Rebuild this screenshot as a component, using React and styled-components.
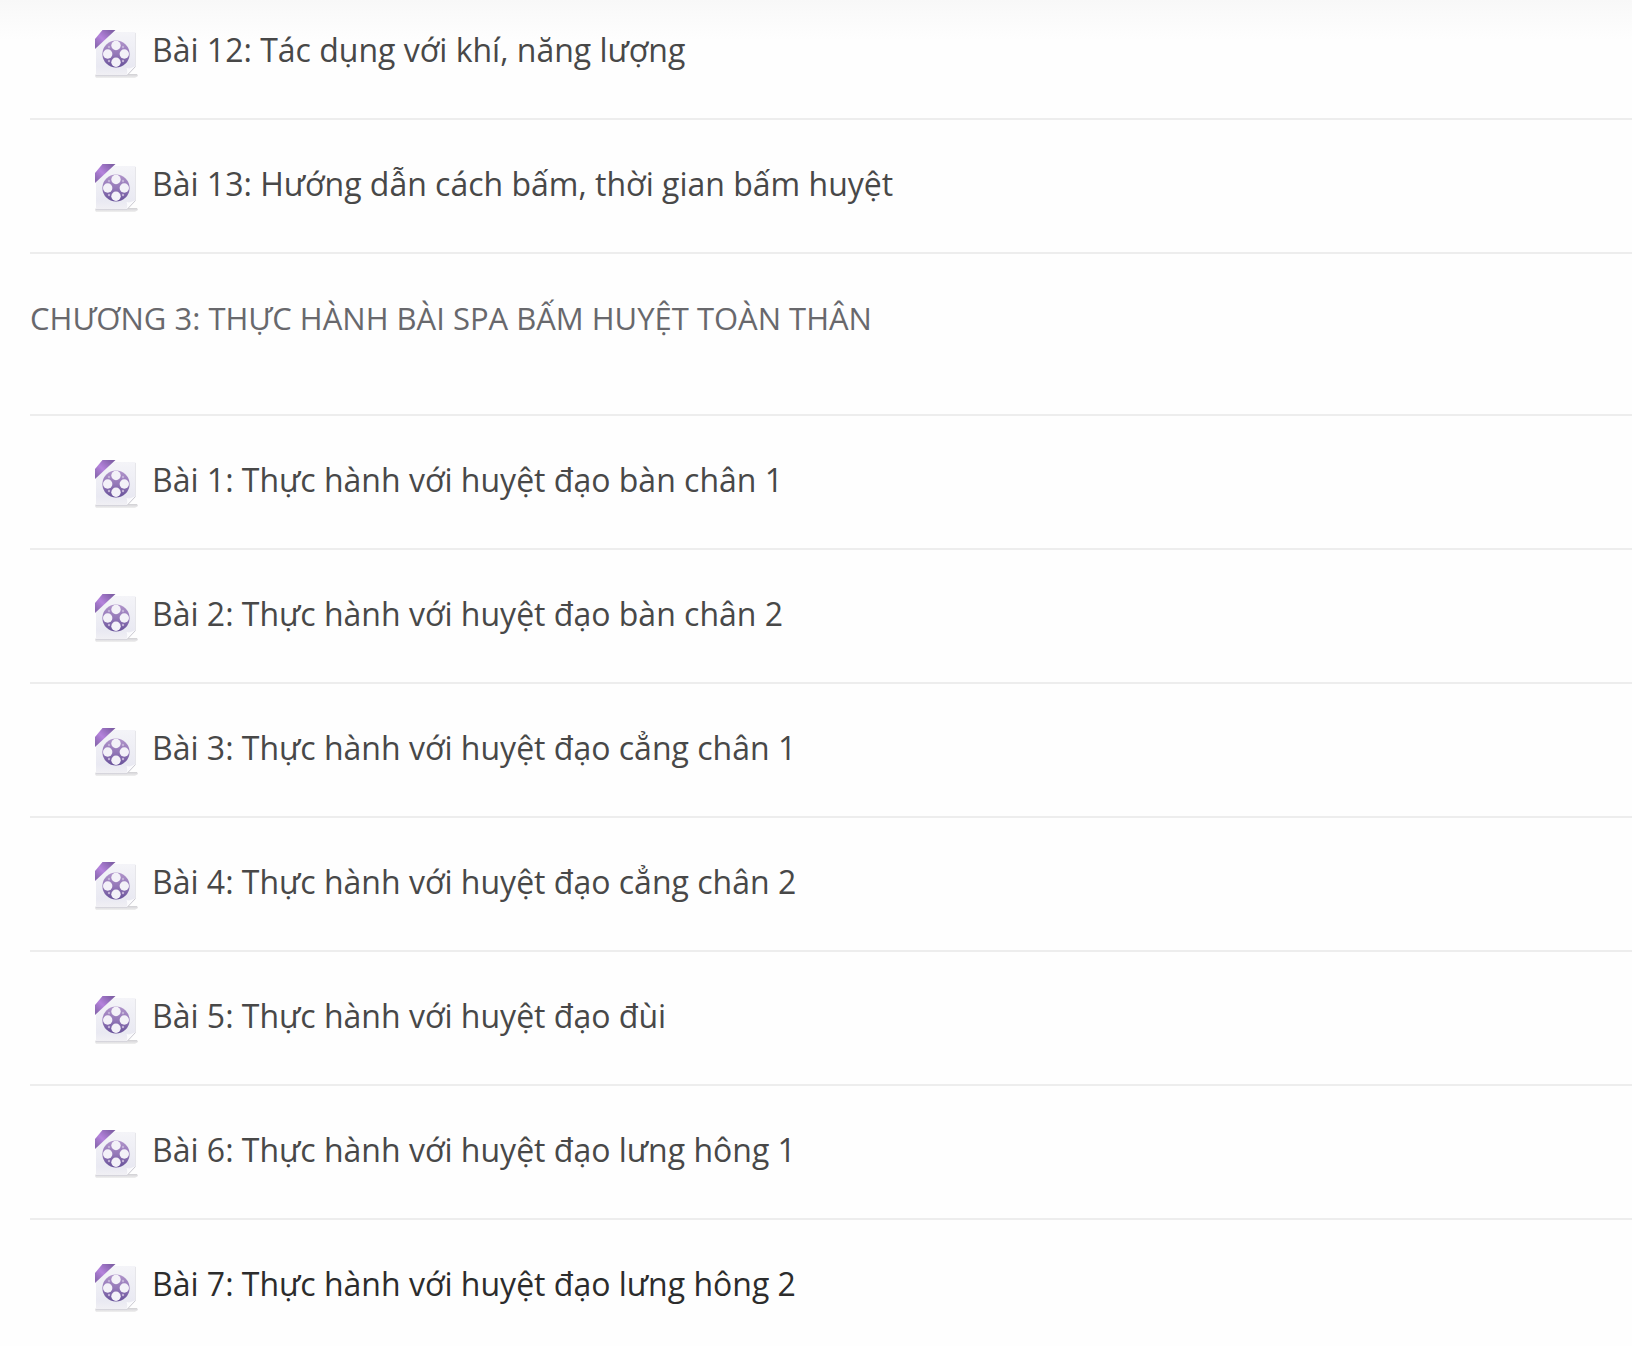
import React from "react";
import styled, { createGlobalStyle } from "styled-components";

const introLessons = [
  "Bài 12: Tác dụng với khí, năng lượng",
  "Bài 13: Hướng dẫn cách bấm, thời gian bấm huyệt",
];

const practiceLessons = [
  "Bài 1: Thực hành với huyệt đạo bàn chân 1",
  "Bài 2: Thực hành với huyệt đạo bàn chân 2",
  "Bài 3: Thực hành với huyệt đạo cẳng chân 1",
  "Bài 4: Thực hành với huyệt đạo cẳng chân 2",
  "Bài 5: Thực hành với huyệt đạo đùi",
  "Bài 6: Thực hành với huyệt đạo lưng hông 1",
  "Bài 7: Thực hành với huyệt đạo lưng hông 2",
];

// gradients shared by every video icon on the page
const IconDefs = () => (
  <Defs aria-hidden="true">
    <defs>
      <linearGradient id="paper" x1="0" y1="0" x2="0" y2="1">
        <stop offset="0" stopColor="#f4f4f8" />
        <stop offset="0.8" stopColor="#e9e9f2" />
        <stop offset="1" stopColor="#f1f0f4" />
      </linearGradient>
      <linearGradient id="ribbon" x1="0" y1="1" x2="1" y2="0">
        <stop offset="0.1" stopColor="#8a68b0" />
        <stop offset="0.45" stopColor="#b583dc" />
        <stop offset="0.9" stopColor="#7f5fa6" />
      </linearGradient>
      <linearGradient id="reel" x1="0" y1="0" x2="0" y2="1">
        <stop offset="0" stopColor="#b094ca" />
        <stop offset="0.5" stopColor="#9478b8" />
        <stop offset="1" stopColor="#665098" />
      </linearGradient>
      <linearGradient id="shadow" x1="0" y1="0" x2="0" y2="1">
        <stop offset="0" stopColor="#c6c5ca" />
        <stop offset="1" stopColor="#ececec" />
      </linearGradient>
    </defs>
  </Defs>
);

const VideoIcon = () => (
  <Icon viewBox="0 0 44 48" aria-hidden="true">
    <path d="M2 44h41l1 2-3 2H2l-1-2z" fill="url(#shadow)" opacity="0.8" />
    <path d="M12 2h29.500v34.500L33 45.500H2V12z" fill="url(#paper)" />
    <path d="M41.500 3v33" stroke="#e6e6ea" strokeWidth="1" />
    <path d="M2 45.500h31" stroke="#d6d5dc" strokeWidth="1" />
    <path d="M32.500 45.500c1-3 1-5 0-7.500 3 1 5 0 9-2z" fill="#fbfbfd" />
    <path d="M33 45.500l8.500-9" stroke="#cccbd2" strokeWidth="1" />
    <path d="M8.500 0H21.500L1 19V9z" fill="url(#ribbon)" />
    <circle cx="22" cy="24" r="13.600" fill="url(#reel)" />
    <g fill="#f3f1f8">
      <circle cx="22" cy="15.500" r="4.700" />
      <circle cx="13.700" cy="24" r="4.700" />
      <circle cx="30.300" cy="24" r="4.700" />
      <circle cx="22" cy="32.300" r="4.700" />
    </g>
    <g fill="#c3b2d8">
      <circle cx="15" cy="17" r="1.200" />
      <circle cx="29" cy="17" r="1.200" />
      <circle cx="15" cy="31" r="1.200" />
      <circle cx="29" cy="31" r="1.200" />
    </g>
  </Icon>
);

const LessonList = ({ lessons, active, continued }) => (
  <List $continued={continued}>
    {lessons.map((title) => (
      <Lesson key={title}>
        <VideoIcon />
        <LessonLink href="#" $active={title === active}>
          {title}
        </LessonLink>
      </Lesson>
    ))}
  </List>
);

const App = () => {
  return (
    <Page>
      <GlobalStyle />
      <IconDefs />
      <LessonList lessons={introLessons} continued />
      <Chapter>Chương 3: Thực hành bài spa bấm huyệt toàn thân</Chapter>
      <LessonList lessons={practiceLessons} active={practiceLessons[6]} />
    </Page>
  );
};

export default App;

const GlobalStyle = createGlobalStyle`
  body {
    margin: 0;
    background: #fefefe;
    font-family: "Open Sans", "Noto Sans", sans-serif;
  }
`;

const Page = styled.main`
  padding-left: 30px;
  background: linear-gradient(#f8f8f8, #fefefe 40px);
`;

const Defs = styled.svg`
  position: absolute;
  width: 0;
  height: 0;
`;

const Lesson = styled.li`
  display: flex;
  align-items: flex-start;
  gap: 14px;
  padding: 44px 0 40px 64px;
  border-bottom: 2px solid #ededed;
`;

const List = styled.ul`
  margin: 0;
  padding: 0;
  list-style: none;

  ${Lesson}:first-child {
    padding-top: ${({ $continued }) => ($continued ? "30px" : "44px")};
  }

  &:last-child ${Lesson}:last-child {
    padding-bottom: 34px;
    border-bottom: 0;
  }
`;

const Icon = styled.svg`
  flex: none;
  width: 44px;
  height: 48px;
`;

const LessonLink = styled.a`
  color: ${({ $active }) => ($active ? "#2c2c2c" : "#484848")};
  font-size: 32px;
  font-weight: 500;
  line-height: 40px;
  text-decoration: none;
`;

const Chapter = styled.h2`
  margin: 0;
  padding: 44px 0 76px;
  border-bottom: 2px solid #ededed;
  color: #68686c;
  font-size: 31px;
  font-weight: 500;
  line-height: 40px;
  text-transform: uppercase;
`;
